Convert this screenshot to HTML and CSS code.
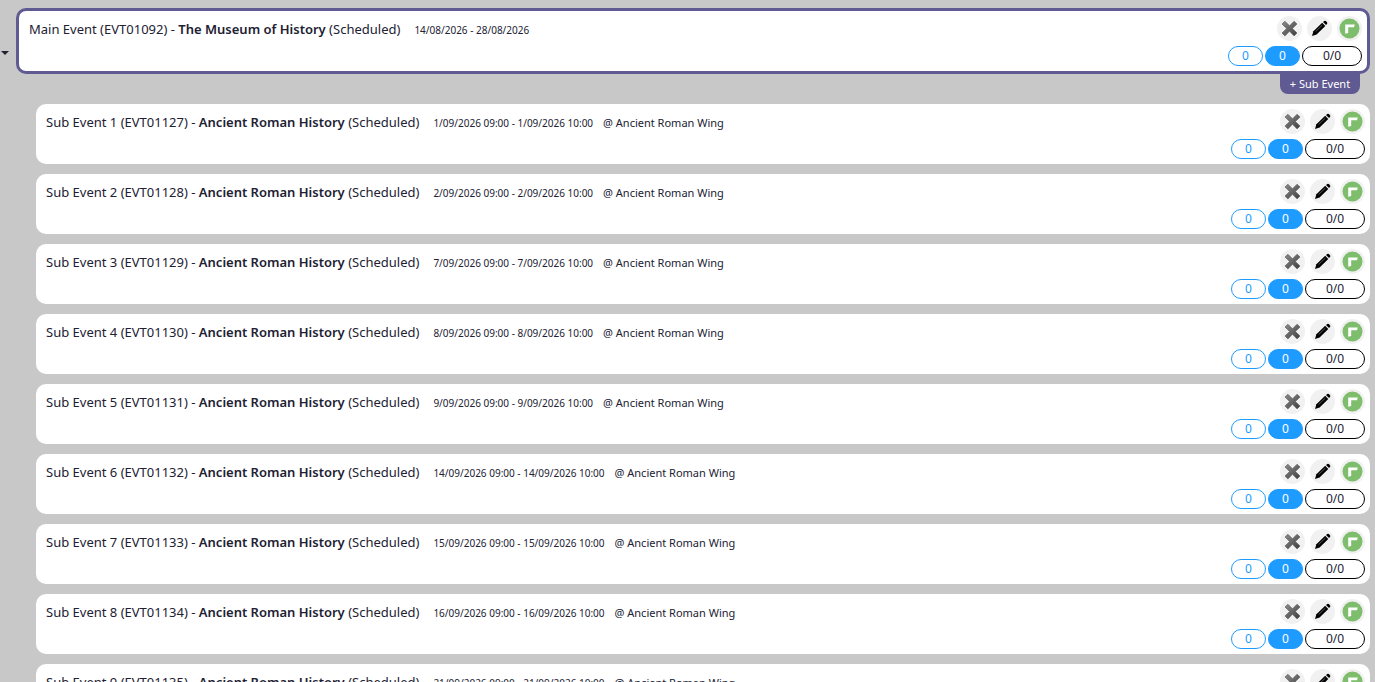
FILE: index.html
```html
<!DOCTYPE html>
<html lang="en">
<head>
    <meta charset="UTF-8">
    <meta name="viewport" content="width=device-width, initial-scale=1.0">
    <title>Events</title>
    <link rel="stylesheet" href="styles.css">
</head>
<body>

<!-- Shared icons -->
<svg class="sprite" aria-hidden="true">
    <defs>
        <linearGradient id="crossFill" x1="0" y1="0" x2="1" y2="1">
            <stop offset="0" stop-color="#8c8c8c"/>
            <stop offset="1" stop-color="#3e3e3e"/>
        </linearGradient>
    </defs>
    <symbol id="cross" viewBox="0 0 25 25">
        <path fill="url(#crossFill)" stroke="#555" stroke-width="0.6" d="M7.9 5.2 12.5 9.8 17.1 5.2 20 8 15.4 12.5 20 17 17.1 19.9 12.5 15.3 7.9 19.9 5 17 9.6 12.5 5 8z"/>
    </symbol>
    <symbol id="pencil" viewBox="0 0 25 25">
        <path d="M5 20 6.4 15.2 15.2 6.8 18.3 9.9 9.6 18.4z"/>
        <path d="M16 6 17.3 4.9Q18.1 4.4 18.9 5.1L20 6.2Q20.7 7 20 7.9L19 9z"/>
        <path fill="none" stroke="#999" stroke-width="0.6" d="M8.6 15.6 15.4 9"/>
    </symbol>
    <symbol id="corner" viewBox="0 0 25 25">
        <circle cx="12.5" cy="12.5" r="10" fill="#7dbd6c"/>
        <path fill="#fff" d="M8.2 8.4H17.8L17 11.3H11.2V16.9L8.2 17.7z"/>
    </symbol>
</svg>

<main class="events">
    <section class="main-row">
        <button class="toggle" aria-label="Collapse sub events"></button>
        <article class="card card-main">
            <div class="info">
                <span class="title">Main Event (EVT01092) - <b>The Museum of History</b> (Scheduled)</span>
                <span class="dates">14/08/2026 - 28/08/2026</span>
            </div>
            <div class="side">
                <div class="actions">
                    <button class="icon" aria-label="Cancel"><svg><use href="#cross"/></svg></button>
                    <button class="icon" aria-label="Edit"><svg><use href="#pencil"/></svg></button>
                    <button class="icon" aria-label="Open"><svg><use href="#corner"/></svg></button>
                </div>
                <div class="counts">
                    <span class="pill">0</span>
                    <span class="pill pill-blue">0</span>
                    <span class="pill pill-total">0/0</span>
                </div>
            </div>
        </article>
    </section>
    <div class="add-row">
        <button class="add">+ Sub Event</button>
    </div>

    <section class="sub-events">
        <article class="card">
            <div class="info">
                <span class="title">Sub Event 1 (EVT01127) - <b>Ancient Roman History</b> (Scheduled)</span>
                <span class="dates">1/09/2026 09:00 - 1/09/2026 10:00</span>
                <span class="place">@ Ancient Roman Wing</span>
            </div>
            <div class="side">
                <div class="actions">
                    <button class="icon" aria-label="Cancel"><svg><use href="#cross"/></svg></button>
                    <button class="icon" aria-label="Edit"><svg><use href="#pencil"/></svg></button>
                    <button class="icon" aria-label="Open"><svg><use href="#corner"/></svg></button>
                </div>
                <div class="counts">
                    <span class="pill">0</span>
                    <span class="pill pill-blue">0</span>
                    <span class="pill pill-total">0/0</span>
                </div>
            </div>
        </article>

        <article class="card">
            <div class="info">
                <span class="title">Sub Event 2 (EVT01128) - <b>Ancient Roman History</b> (Scheduled)</span>
                <span class="dates">2/09/2026 09:00 - 2/09/2026 10:00</span>
                <span class="place">@ Ancient Roman Wing</span>
            </div>
            <div class="side">
                <div class="actions">
                    <button class="icon" aria-label="Cancel"><svg><use href="#cross"/></svg></button>
                    <button class="icon" aria-label="Edit"><svg><use href="#pencil"/></svg></button>
                    <button class="icon" aria-label="Open"><svg><use href="#corner"/></svg></button>
                </div>
                <div class="counts">
                    <span class="pill">0</span>
                    <span class="pill pill-blue">0</span>
                    <span class="pill pill-total">0/0</span>
                </div>
            </div>
        </article>

        <article class="card">
            <div class="info">
                <span class="title">Sub Event 3 (EVT01129) - <b>Ancient Roman History</b> (Scheduled)</span>
                <span class="dates">7/09/2026 09:00 - 7/09/2026 10:00</span>
                <span class="place">@ Ancient Roman Wing</span>
            </div>
            <div class="side">
                <div class="actions">
                    <button class="icon" aria-label="Cancel"><svg><use href="#cross"/></svg></button>
                    <button class="icon" aria-label="Edit"><svg><use href="#pencil"/></svg></button>
                    <button class="icon" aria-label="Open"><svg><use href="#corner"/></svg></button>
                </div>
                <div class="counts">
                    <span class="pill">0</span>
                    <span class="pill pill-blue">0</span>
                    <span class="pill pill-total">0/0</span>
                </div>
            </div>
        </article>

        <article class="card">
            <div class="info">
                <span class="title">Sub Event 4 (EVT01130) - <b>Ancient Roman History</b> (Scheduled)</span>
                <span class="dates">8/09/2026 09:00 - 8/09/2026 10:00</span>
                <span class="place">@ Ancient Roman Wing</span>
            </div>
            <div class="side">
                <div class="actions">
                    <button class="icon" aria-label="Cancel"><svg><use href="#cross"/></svg></button>
                    <button class="icon" aria-label="Edit"><svg><use href="#pencil"/></svg></button>
                    <button class="icon" aria-label="Open"><svg><use href="#corner"/></svg></button>
                </div>
                <div class="counts">
                    <span class="pill">0</span>
                    <span class="pill pill-blue">0</span>
                    <span class="pill pill-total">0/0</span>
                </div>
            </div>
        </article>

        <article class="card">
            <div class="info">
                <span class="title">Sub Event 5 (EVT01131) - <b>Ancient Roman History</b> (Scheduled)</span>
                <span class="dates">9/09/2026 09:00 - 9/09/2026 10:00</span>
                <span class="place">@ Ancient Roman Wing</span>
            </div>
            <div class="side">
                <div class="actions">
                    <button class="icon" aria-label="Cancel"><svg><use href="#cross"/></svg></button>
                    <button class="icon" aria-label="Edit"><svg><use href="#pencil"/></svg></button>
                    <button class="icon" aria-label="Open"><svg><use href="#corner"/></svg></button>
                </div>
                <div class="counts">
                    <span class="pill">0</span>
                    <span class="pill pill-blue">0</span>
                    <span class="pill pill-total">0/0</span>
                </div>
            </div>
        </article>

        <article class="card">
            <div class="info">
                <span class="title">Sub Event 6 (EVT01132) - <b>Ancient Roman History</b> (Scheduled)</span>
                <span class="dates">14/09/2026 09:00 - 14/09/2026 10:00</span>
                <span class="place">@ Ancient Roman Wing</span>
            </div>
            <div class="side">
                <div class="actions">
                    <button class="icon" aria-label="Cancel"><svg><use href="#cross"/></svg></button>
                    <button class="icon" aria-label="Edit"><svg><use href="#pencil"/></svg></button>
                    <button class="icon" aria-label="Open"><svg><use href="#corner"/></svg></button>
                </div>
                <div class="counts">
                    <span class="pill">0</span>
                    <span class="pill pill-blue">0</span>
                    <span class="pill pill-total">0/0</span>
                </div>
            </div>
        </article>

        <article class="card">
            <div class="info">
                <span class="title">Sub Event 7 (EVT01133) - <b>Ancient Roman History</b> (Scheduled)</span>
                <span class="dates">15/09/2026 09:00 - 15/09/2026 10:00</span>
                <span class="place">@ Ancient Roman Wing</span>
            </div>
            <div class="side">
                <div class="actions">
                    <button class="icon" aria-label="Cancel"><svg><use href="#cross"/></svg></button>
                    <button class="icon" aria-label="Edit"><svg><use href="#pencil"/></svg></button>
                    <button class="icon" aria-label="Open"><svg><use href="#corner"/></svg></button>
                </div>
                <div class="counts">
                    <span class="pill">0</span>
                    <span class="pill pill-blue">0</span>
                    <span class="pill pill-total">0/0</span>
                </div>
            </div>
        </article>

        <article class="card">
            <div class="info">
                <span class="title">Sub Event 8 (EVT01134) - <b>Ancient Roman History</b> (Scheduled)</span>
                <span class="dates">16/09/2026 09:00 - 16/09/2026 10:00</span>
                <span class="place">@ Ancient Roman Wing</span>
            </div>
            <div class="side">
                <div class="actions">
                    <button class="icon" aria-label="Cancel"><svg><use href="#cross"/></svg></button>
                    <button class="icon" aria-label="Edit"><svg><use href="#pencil"/></svg></button>
                    <button class="icon" aria-label="Open"><svg><use href="#corner"/></svg></button>
                </div>
                <div class="counts">
                    <span class="pill">0</span>
                    <span class="pill pill-blue">0</span>
                    <span class="pill pill-total">0/0</span>
                </div>
            </div>
        </article>

        <article class="card">
            <div class="info">
                <span class="title">Sub Event 9 (EVT01135) - <b>Ancient Roman History</b> (Scheduled)</span>
                <span class="dates">21/09/2026 09:00 - 21/09/2026 10:00</span>
                <span class="place">@ Ancient Roman Wing</span>
            </div>
            <div class="side">
                <div class="actions">
                    <button class="icon" aria-label="Cancel"><svg><use href="#cross"/></svg></button>
                    <button class="icon" aria-label="Edit"><svg><use href="#pencil"/></svg></button>
                    <button class="icon" aria-label="Open"><svg><use href="#corner"/></svg></button>
                </div>
                <div class="counts">
                    <span class="pill">0</span>
                    <span class="pill pill-blue">0</span>
                    <span class="pill pill-total">0/0</span>
                </div>
            </div>
        </article>
    </section>
</main>

</body>
</html>
```
FILE: styles.css
```css
* {
    box-sizing: border-box;
}

body {
    margin: 0;
    background-color: #c8c8c8;
    color: #212133;
    font-family: "Noto Sans", "Open Sans", sans-serif;
    font-size: 13px;
}

button {
    margin: 0;
    padding: 0;
    border: 0;
    font-family: inherit;
    cursor: pointer;
}

b {
    font-weight: 600;
}

.sprite {
    display: block;
    width: 0;
    height: 0;
}

.events {
    padding: 8px 5px 8px 0;
}

.main-row {
    display: flex;
}

.toggle {
    width: 16px;
    padding: 24px 7px 0 1px;
    background: none;
}

.toggle::before {
    content: "";
    display: block;
    border: 4px solid transparent;
    border-top-color: #212133;
    border-bottom: 0;
}

.card {
    display: flex;
    flex: 1;
    justify-content: space-between;
    padding: 5px 5px 5px 10px;
    border-radius: 10px;
    background-color: #fff;
}

.card-main {
    border: 3px solid #5f5a92;
}

.info {
    display: flex;
    align-items: baseline;
    padding-top: 4px;
    line-height: 18px;
}

.dates {
    margin-left: 14px;
    font-size: 10px;
}

.place {
    margin-left: 10px;
    font-size: 11px;
}

.side {
    display: flex;
    flex-direction: column;
    align-items: flex-end;
    gap: 5px;
}

.actions {
    display: flex;
    gap: 5px;
}

.icon {
    width: 25px;
    height: 25px;
    border-radius: 50%;
    background-color: #f1f1f1;
}

.icon svg {
    display: block;
    width: 25px;
    height: 25px;
}

.counts {
    display: flex;
    gap: 2px;
}

.pill {
    width: 35px;
    height: 20px;
    border: 1px solid #1e9bff;
    border-radius: 10px;
    color: #1e9bff;
    font-size: 12px;
    line-height: 18px;
    text-align: center;
}

.pill-blue {
    background-color: #1e9bff;
    color: #fff;
}

.pill-total {
    width: 60px;
    border-color: #000;
    color: #212133;
}

.add-row {
    display: flex;
    justify-content: flex-end;
    padding-right: 10px;
}

.add {
    width: 80px;
    height: 20px;
    padding-bottom: 2px;
    border-radius: 0 0 8px 8px;
    background-color: #5f5a92;
    color: #fff;
    font-size: 11px;
}

.sub-events {
    display: flex;
    flex-direction: column;
    gap: 10px;
    padding: 10px 0 0 36px;
}
```
